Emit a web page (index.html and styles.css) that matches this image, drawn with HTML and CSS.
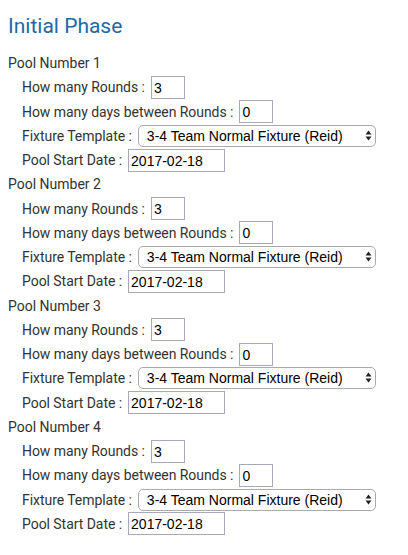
FILE: index.html
```html
<!DOCTYPE html>
<html>
<head>
<meta charset="utf-8">
<link rel="stylesheet" href="styles.css">
</head>
<body>
<h2 class="title">Initial Phase</h2>
<div class="pools">
  <section class="pool">
    <div class="pool-name">Pool Number 1</div>
    <div class="row"><span class="lbl">How many Rounds :</span><input class="inp small" value="3"></div>
    <div class="row"><span class="lbl">How many days between Rounds :</span><input class="inp small" value="0"></div>
    <div class="row"><span class="lbl">Fixture Template :</span><span class="sel-wrap"><select class="sel"><option>3-4 Team Normal Fixture (Reid)</option></select><svg class="arrows" width="7" height="11" viewBox="0 0 7 11"><path d="M3.5 0.5 L6.5 4.5 H0.5 Z M3.5 10.5 L6.5 6.5 H0.5 Z" fill="#222"/></svg></span></div>
    <div class="row"><span class="lbl">Pool Start Date :</span><input class="inp date" value="2017-02-18"></div>
  </section>
  <section class="pool">
    <div class="pool-name">Pool Number 2</div>
    <div class="row"><span class="lbl">How many Rounds :</span><input class="inp small" value="3"></div>
    <div class="row"><span class="lbl">How many days between Rounds :</span><input class="inp small" value="0"></div>
    <div class="row"><span class="lbl">Fixture Template :</span><span class="sel-wrap"><select class="sel"><option>3-4 Team Normal Fixture (Reid)</option></select><svg class="arrows" width="7" height="11" viewBox="0 0 7 11"><path d="M3.5 0.5 L6.5 4.5 H0.5 Z M3.5 10.5 L6.5 6.5 H0.5 Z" fill="#222"/></svg></span></div>
    <div class="row"><span class="lbl">Pool Start Date :</span><input class="inp date" value="2017-02-18"></div>
  </section>
  <section class="pool">
    <div class="pool-name">Pool Number 3</div>
    <div class="row"><span class="lbl">How many Rounds :</span><input class="inp small" value="3"></div>
    <div class="row"><span class="lbl">How many days between Rounds :</span><input class="inp small" value="0"></div>
    <div class="row"><span class="lbl">Fixture Template :</span><span class="sel-wrap"><select class="sel"><option>3-4 Team Normal Fixture (Reid)</option></select><svg class="arrows" width="7" height="11" viewBox="0 0 7 11"><path d="M3.5 0.5 L6.5 4.5 H0.5 Z M3.5 10.5 L6.5 6.5 H0.5 Z" fill="#222"/></svg></span></div>
    <div class="row"><span class="lbl">Pool Start Date :</span><input class="inp date" value="2017-02-18"></div>
  </section>
  <section class="pool">
    <div class="pool-name">Pool Number 4</div>
    <div class="row"><span class="lbl">How many Rounds :</span><input class="inp small" value="3"></div>
    <div class="row"><span class="lbl">How many days between Rounds :</span><input class="inp small" value="0"></div>
    <div class="row"><span class="lbl">Fixture Template :</span><span class="sel-wrap"><select class="sel"><option>3-4 Team Normal Fixture (Reid)</option></select><svg class="arrows" width="7" height="11" viewBox="0 0 7 11"><path d="M3.5 0.5 L6.5 4.5 H0.5 Z M3.5 10.5 L6.5 6.5 H0.5 Z" fill="#222"/></svg></span></div>
    <div class="row"><span class="lbl">Pool Start Date :</span><input class="inp date" value="2017-02-18"></div>
  </section>
</div>
</body>
</html>
```
FILE: styles.css
```css
html, body {
  margin: 0;
  padding: 0;
  background: #fff;
}
body {
  padding: 0 8px;
  font-family: Roboto, "Liberation Sans", sans-serif;
  color: #333;
}
.title {
  margin: 14px 0 13px;
  font-size: 21px;
  line-height: 24px;
  font-weight: 400;
  color: #1b6aa5;
}
.pool {
  display: flex;
  flex-direction: column;
}
.pool-name {
  height: 24.25px;
  display: flex;
  align-items: center;
  font-size: 14px;
}
.row {
  height: 24.25px;
  display: flex;
  align-items: center;
  padding-left: 14px;
  font-size: 14px;
  letter-spacing: -0.05px;
}
.lbl {
  margin-right: 6px;
}
.inp {
  box-sizing: border-box;
  height: 23px;
  margin: 0;
  padding: 1px 2px 0;
  border: 1px solid #a8a8bc;
  border-radius: 0;
  font-family: "Liberation Sans", Arial, sans-serif;
  font-size: 14px;
  letter-spacing: 0;
  color: #000;
  background: #fff;
  outline: none;
}
.small { width: 34px; }
.date { width: 97px; }
.sel-wrap {
  position: relative;
  display: inline-flex;
}
.sel {
  -webkit-appearance: none;
  appearance: none;
  box-sizing: border-box;
  width: 238px;
  height: 22px;
  margin: 0;
  padding: 0 0 0 8px;
  border: 1px solid #aaa;
  border-radius: 5px;
  background: #fff;
  font-family: "Liberation Sans", Arial, sans-serif;
  font-size: 14px;
  letter-spacing: 0;
  color: #000;
}
.arrows {
  position: absolute;
  right: 4px;
  top: 5px;
  pointer-events: none;
}
```
